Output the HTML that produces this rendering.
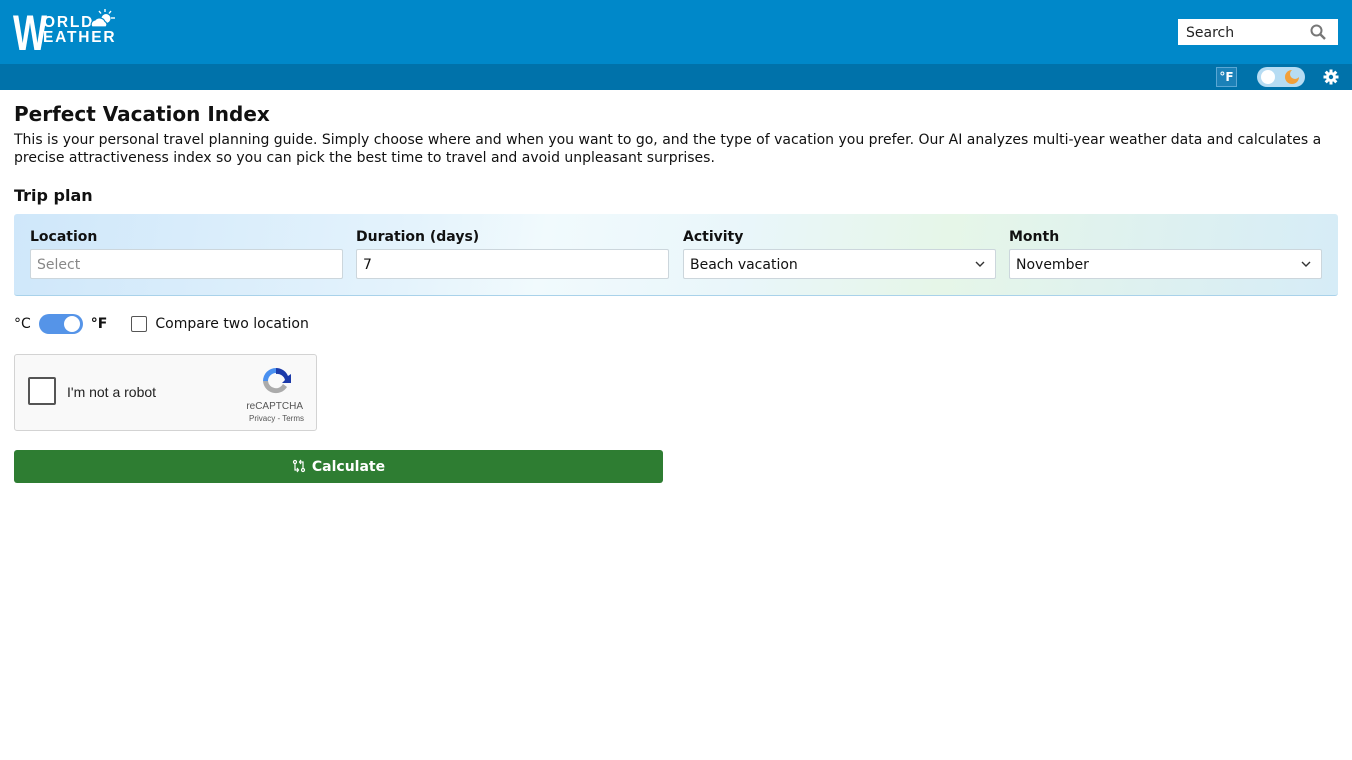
<!DOCTYPE html>
<html><head><meta charset="utf-8"><style>
*{box-sizing:border-box;margin:0;padding:0}
body{width:1352px;height:760px;background:#fff;font-family:"DejaVu Sans",Verdana,sans-serif;color:#111;position:relative;overflow:hidden}
.top{position:absolute;left:0;top:0;width:1352px;height:64px;background:#0088c9}
.sub{position:absolute;left:0;top:64px;width:1352px;height:26px;background:#0072aa}
.logo{position:absolute;left:0;top:0;color:#fff;font-family:"Liberation Sans",Arial,sans-serif;font-weight:bold}
.search{position:absolute;left:1178px;top:19px;width:160px;height:26px;background:#fff;font-size:14px;padding:6px 8px 4px;line-height:16px;color:#222}
h1{position:absolute;left:14px;top:102px;font-size:20px;font-weight:bold}
.desc{position:absolute;left:14px;top:131px;width:1330px;font-size:14px;line-height:18px}
h2{position:absolute;left:14px;top:186px;font-size:16px;font-weight:bold}
.panel{position:absolute;left:14px;top:214px;width:1324px;height:82px;border-radius:3px;background:linear-gradient(100deg,#cfe7fa 0%,#e4f3fc 30%,#f1fafd 40%,#e9f6fa 55%,#e6f6e8 70%,#d6ecf7 100%);border-bottom:1px solid #a9d2ea}
.f{position:absolute;top:15px;width:313px}
.f b{display:block;font-size:14px;margin-bottom:4px}
.in{height:30px;background:#fff;border:1px solid #ccd6dc;border-radius:2px;font-size:14px;padding:7px 6px 5px;line-height:16px;position:relative}
.in svg{position:absolute;right:10px;top:11px}
.row{position:absolute;top:314px;left:14px;font-size:14px;display:flex;align-items:center;height:20px}
.tg{width:44px;height:20px;border-radius:10px;background:#5594e8;position:relative;margin:0 8px}
.tg:after{content:"";position:absolute;right:3px;top:2px;width:16px;height:16px;border-radius:50%;background:#fff}
.cb{width:16px;height:16px;border:1px solid #555;border-radius:2px;margin:0 8px 0 24px;background:#fff}
.cap{position:absolute;left:14px;top:354px;width:303px;height:77px;background:#f9f9f9;border:1px solid #d3d3d3;border-radius:3px;font-family:"Liberation Sans",Arial,sans-serif}
.btn{position:absolute;left:14px;top:450px;width:649px;height:33px;background:#2e7d32;border-radius:3px;color:#fff;font-weight:bold;font-size:14px;text-align:center;line-height:35px}
</style></head><body>
<div class="top"></div><div class="sub"></div>
<div class="logo"><span style="position:absolute;left:13px;top:8px;font-size:50px;line-height:50px;transform:scaleX(.72);transform-origin:left;display:inline-block">W</span>
<span style="position:absolute;left:43px;top:15px;font-size:15.5px;letter-spacing:1.8px;line-height:15px">ORLD</span>
<span style="position:absolute;left:43px;top:30px;font-size:15.5px;letter-spacing:1.8px;line-height:15px">EATHER</span>
<svg style="position:absolute;left:90px;top:9px" width="26" height="19" viewBox="0 0 26 19"><g stroke="#fff" stroke-width="1.4"><line x1="15" y1="0" x2="15" y2="3"/><line x1="9" y1="2" x2="11" y2="4.5"/><line x1="21" y1="2" x2="19" y2="4.5"/><line x1="21" y1="9" x2="25" y2="9"/></g><circle cx="16" cy="9.5" r="4.5" fill="#fff"/><path d="M2 18a4.5 4.5 0 0 1 3-7a6 6 0 0 1 10 1.5a3.5 3.5 0 0 1 1 5.5z" fill="#fff" stroke="#0088c9" stroke-width="1.2"/></svg></div>
<div class="search">Search<svg style="position:absolute;right:12px;top:5px" width="16" height="16" viewBox="0 0 16 16"><circle cx="6.5" cy="6.5" r="5" fill="none" stroke="#777" stroke-width="2"/><line x1="10" y1="10" x2="15" y2="15" stroke="#777" stroke-width="2.4"/></svg></div>
<div style="position:absolute;left:1216px;top:67px;width:21px;height:20px;border:1px solid #5aa7d4;background:#1b81b8;color:#fff;font-size:12px;font-weight:bold;text-align:center;line-height:19px">°F</div>
<div style="position:absolute;left:1257px;top:67px;width:48px;height:20px;border-radius:10px;background:#b6dcf3"><div style="position:absolute;left:4px;top:3px;width:14px;height:14px;border-radius:50%;background:#fff"></div><div style="position:absolute;left:28px;top:3px;width:14px;height:14px;border-radius:50%;background:#f2a03a"></div><div style="position:absolute;left:33px;top:2px;width:10px;height:10px;border-radius:50%;background:#b6dcf3"></div></div>
<svg style="position:absolute;left:1323px;top:69px" width="16" height="16" viewBox="0 0 16 16"><g fill="#fff"><circle cx="8" cy="8" r="5"/><rect x="6.5" y="0.5" width="3" height="15"/><rect x="0.5" y="6.5" width="15" height="3"/><rect x="6.5" y="0.5" width="3" height="15" transform="rotate(45 8 8)"/><rect x="6.5" y="0.5" width="3" height="15" transform="rotate(-45 8 8)"/></g><circle cx="8" cy="8" r="2.2" fill="#0072aa"/></svg>
<h1>Perfect Vacation Index</h1>
<div class="desc">This is your personal travel planning guide. Simply choose where and when you want to go, and the type of vacation you prefer. Our AI analyzes multi-year weather data and calculates a precise attractiveness index so you can pick the best time to travel and avoid unpleasant surprises.</div>
<h2>Trip plan</h2>
<div class="panel">
<div class="f" style="left:16px"><b>Location</b><div class="in" style="color:#888">Select</div></div>
<div class="f" style="left:342px"><b>Duration (days)</b><div class="in">7</div></div>
<div class="f" style="left:669px"><b>Activity</b><div class="in">Beach vacation<svg width="10" height="7" viewBox="0 0 10 7"><path d="M1 1l4 4 4-4" fill="none" stroke="#333" stroke-width="1.4"/></svg></div></div>
<div class="f" style="left:995px"><b>Month</b><div class="in">November<svg width="10" height="7" viewBox="0 0 10 7"><path d="M1 1l4 4 4-4" fill="none" stroke="#333" stroke-width="1.4"/></svg></div></div>
</div>
<div class="row">°C<div class="tg"></div><b>°F</b><div class="cb"></div>Compare two location</div>
<div class="cap"><div style="position:absolute;left:13px;top:22px;width:28px;height:28px;border:2px solid #555;border-radius:2px;background:#fff"></div>
<div style="position:absolute;left:52px;top:29px;font-size:14px;color:#222">I'm not a robot</div>
<svg style="position:absolute;left:245px;top:10px" width="32" height="32" viewBox="0 0 32 32"><path d="M16 3a13 13 0 0 1 12 8l3-2v9h-9l3-3a8 8 0 0 0-9-6z" fill="#1c3aa9"/><path d="M16 3a13 13 0 0 0-13 13h5a8 8 0 0 1 8-8z" fill="#4a90f0"/><path d="M3 16a13 13 0 0 0 24 6l-4-3a8 8 0 0 1-15-3z" fill="#ababab"/></svg>
<div style="position:absolute;right:13px;top:46px;font-size:10px;color:#555">reCAPTCHA</div>
<div style="position:absolute;right:12px;top:59px;font-size:8px;color:#555">Privacy - Terms</div></div>
<div class="btn"><svg width="14" height="14" viewBox="0 0 14 14" style="vertical-align:-2px;margin-right:6px"><g fill="none" stroke="#fff" stroke-width="1.2"><circle cx="3" cy="3" r="1.5"/><circle cx="11" cy="11" r="1.5"/><path d="M3 5v6h3M11 9V3H8"/><path d="M5 9l1.5 2L5 13M9 1L7.5 3 9 5"/></g></svg>Calculate</div>
</body></html>
